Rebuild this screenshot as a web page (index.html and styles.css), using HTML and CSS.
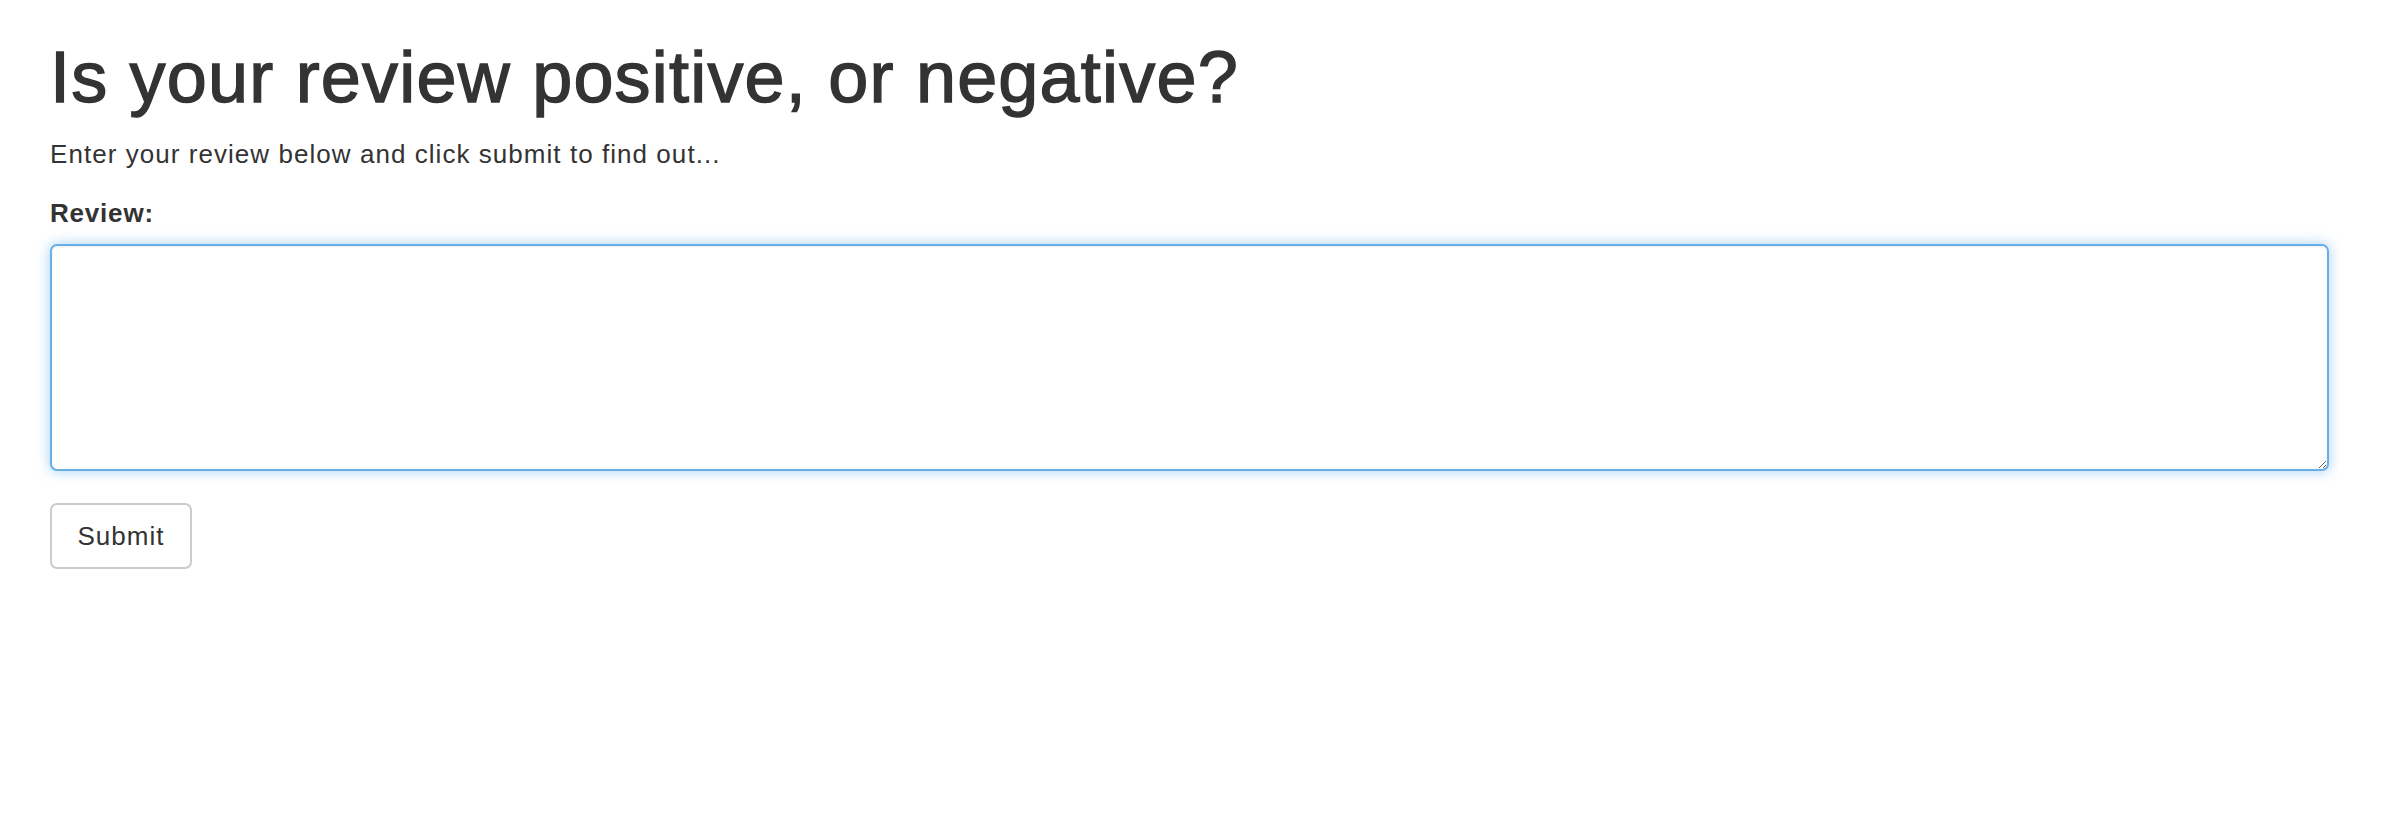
FILE: index.html
```html
<!DOCTYPE html>
<html lang="en">
<head>
<meta charset="utf-8">
<title>Review sentiment</title>
<link rel="stylesheet" href="styles.css">
</head>
<body>
<div class="container">
  <h1 class="title">Is your review positive, or negative?</h1>
  <p class="lead-text">Enter your review below and click submit to find out...</p>
  <form class="review-form">
    <label class="field-label" for="review">Review:</label>
    <textarea id="review" class="review-input"></textarea>
    <button type="button" class="submit-btn">Submit</button>
  </form>
</div>
</body>
</html>
```

FILE: styles.css
```css
html, body {
  margin: 0;
  padding: 0;
  background: #fff;
}

body {
  font-family: "Liberation Sans", Arial, Helvetica, sans-serif;
  color: #333;
}

.container {
  padding: 39px 73px 0 50px;
}

.title {
  margin: 0;
  font-size: 72px;
  line-height: 77px;
  font-weight: 400;
  letter-spacing: 1.2px;
  -webkit-text-stroke: 1.4px #333;
}

.lead-text {
  margin: 21px 0 0 0;
  font-size: 26px;
  line-height: 34px;
  letter-spacing: 1.05px;
}

.review-form {
  display: flex;
  flex-direction: column;
  align-items: flex-start;
  margin-top: 25px;
}

.field-label {
  font-size: 26px;
  font-weight: 700;
  line-height: 34px;
  letter-spacing: 0.8px;
}

.review-input {
  box-sizing: border-box;
  margin-top: 14px;
  width: 100%;
  height: 227px;
  border: 2px solid #66afe9;
  border-radius: 7px;
  box-shadow: inset 0 1px 2px rgba(0,0,0,.075), 0 0 13px rgba(102,175,233,.6);
  outline: none;
  font-family: inherit;
  font-size: 24px;
  padding: 10px 20px;
  resize: vertical;
}

.submit-btn {
  box-sizing: border-box;
  margin-top: 32px;
  width: 142px;
  height: 66px;
  background: #fff;
  border: 2px solid #ccc;
  border-radius: 7px;
  font-family: inherit;
  font-size: 26px;
  letter-spacing: 1px;
  color: #333;
  padding: 0;
  cursor: pointer;
}
```
